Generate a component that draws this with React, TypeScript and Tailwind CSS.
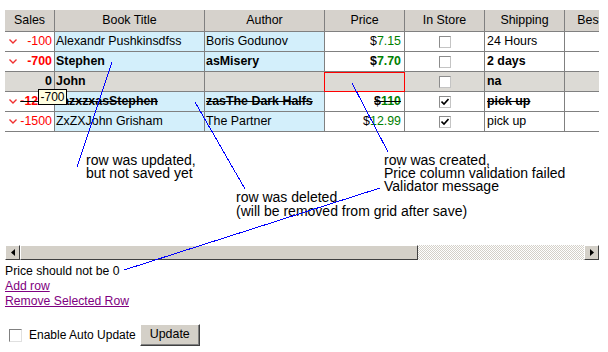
import React from 'react';

type Row = {
  sales: string;
  chevron: boolean;
  salesRed: boolean;
  title: string;
  author: string;
  price: string;
  inStore: boolean;
  shipping: string;
  bold?: boolean;
  strike?: boolean;
  gray?: boolean;
  invalid?: boolean;
};

const rows: Row[] = [
  { sales: '-100', chevron: true, salesRed: true, title: 'Alexandr Pushkinsdfss', author: 'Boris Godunov', price: '7.15', inStore: false, shipping: '24 Hours' },
  { sales: '-700', chevron: true, salesRed: true, title: 'Stephen', author: 'asMisery', price: '7.70', inStore: false, shipping: '2 days', bold: true },
  { sales: '0', chevron: false, salesRed: false, title: 'John', author: '', price: '', inStore: false, shipping: 'na', bold: true, gray: true, invalid: true },
  { sales: '-1200', chevron: true, salesRed: true, title: 'zazxzxasStephen', author: 'zasThe Dark Halfs', price: '110', inStore: true, shipping: 'pick up', bold: true, strike: true },
  { sales: '-1500', chevron: true, salesRed: true, title: 'ZxZXJohn Grisham', author: 'The Partner', price: '12.99', inStore: true, shipping: 'pick up' },
];

const Chevron = () => (
  <svg width="8" height="5" viewBox="0 0 8 5" className="shrink-0">
    <polyline points="0.5,0.5 4,4 7.5,0.5" fill="none" stroke="#f03030" strokeWidth="1.4" />
  </svg>
);

const CheckBox = ({ checked }: { checked: boolean }) => (
  <div className="w-[12px] h-[12px] bg-white border border-t-[#8c8c8c] border-l-[#8c8c8c] border-r-[#c4c4c4] border-b-[#c4c4c4] flex items-center justify-center">
    {checked && (
      <svg width="8" height="8" viewBox="0 0 8 8">
        <polyline points="0.5,3.5 3,6 7.5,1" fill="none" stroke="#000" strokeWidth="1.6" />
      </svg>
    )}
  </div>
);

const ScrollButton = ({ dir }: { dir: 'left' | 'right' }) => (
  <div className="w-[15px] h-full shrink-0 bg-[#d4d0c8] border border-t-white border-l-white border-r-[#404040] border-b-[#404040] flex items-center justify-center">
    <svg width="4" height="7" viewBox="0 0 4 7">
      {dir === 'left' ? <polygon points="4,0 0,3.5 4,7" fill="#000" /> : <polygon points="0,0 4,3.5 0,7" fill="#000" />}
    </svg>
  </div>
);

const App: React.FC = () => {
  const cell = 'h-full shrink-0 border-r border-[#808080] flex items-center overflow-hidden whitespace-nowrap';

  return (
    <div className="relative w-[608px] h-[352px] overflow-hidden bg-white text-black font-['Liberation_Sans',Arial,sans-serif] text-[12.4px]">
      <div className="pt-[10px]">
        {/* grid */}
        <div className="ml-[5px] w-[594px] overflow-hidden">
          <div className="flex h-[22px] border-b border-[#808080] bg-[#d6d2cc] w-[640px]">
            <div className={`${cell} w-[50px] justify-center`}>Sales</div>
            <div className={`${cell} w-[150px] justify-center`}>Book Title</div>
            <div className={`${cell} w-[120px] justify-center`}>Author</div>
            <div className={`${cell} w-[80px] justify-center`}>Price</div>
            <div className={`${cell} w-[80px] justify-center`}>In Store</div>
            <div className={`${cell} w-[80px] justify-center`}>Shipping</div>
            <div className={`${cell} w-[80px] justify-center`}>Bestseller</div>
          </div>

          {rows.map((r, i) => (
            <div
              key={i}
              className={`flex h-[20px] w-[640px] border-b border-[#808080] ${r.bold ? 'font-bold' : ''} ${r.strike ? 'line-through decoration-black' : ''} ${r.gray ? 'bg-[#dcdad5]' : 'bg-white'}`}
            >
              <div className={`${cell} w-[50px] justify-between pl-[4px] pr-[2px]`}>
                {r.chevron ? <Chevron /> : <span />}
                <span className={r.salesRed ? 'text-[#ff0000]' : 'text-black'}>{r.sales}</span>
              </div>
              <div className={`${cell} w-[150px] pl-px ${r.gray ? '' : 'bg-[#d3effb]'}`}>{r.title}</div>
              <div className={`${cell} w-[120px] pl-px ${r.gray ? '' : 'bg-[#d3effb]'}`}>{r.author}</div>
              <div className={`${cell} relative w-[80px] justify-end pr-[3px] overflow-visible`}>
                {r.price && (
                  <span>
                    $<span className="text-[#008000]">{r.price}</span>
                  </span>
                )}
                {r.invalid && <div className="absolute -left-px top-0 -right-px -bottom-px border border-[#ff0000]" />}
              </div>
              <div className={`${cell} w-[80px] justify-center`}>
                <CheckBox checked={r.inStore} />
              </div>
              <div className={`${cell} w-[80px] pl-[2px]`}>{r.shipping}</div>
              <div className={`${cell} w-[80px]`} />
            </div>
          ))}
        </div>

        {/* horizontal scrollbar */}
        <div className="ml-[5px] mt-[113px] w-[594px] h-[15px] flex">
          <ScrollButton dir="left" />
          <div className="w-[398px] h-full shrink-0 bg-[#d4d0c8] border border-t-white border-l-white border-r-[#404040] border-b-[#404040]" />
          <div className="flex-1 h-full bg-[image:repeating-conic-gradient(#d4d0c8_0_25%,#ffffff_0_50%)] bg-[length:2px_2px]" />
          <ScrollButton dir="right" />
        </div>

        <div className="mt-[4px] pl-[5px] leading-[15px] text-[12.2px]">
          <div>Price should not be 0</div>
          <div>
            <a href="#" className="text-[#800080] underline">Add row</a>
          </div>
          <div>
            <a href="#" className="text-[#800080] underline">Remove Selected Row</a>
          </div>
        </div>

        <div className="mt-[15px] h-[22px] flex items-center text-[12px]">
          <div className="ml-[9px] w-[13px] h-[13px] bg-white border border-t-[#808080] border-l-[#808080] border-r-[#e0e0e0] border-b-[#e0e0e0]" />
          <span className="ml-[7px]">Enable Auto Update</span>
          <button className="ml-[4px] w-[60px] h-[22px] bg-[#d4d0c8] border border-t-white border-l-white border-r-[#404040] border-b-[#404040] shadow-[inset_-1px_-1px_0_#808080] text-[12.4px] pb-[2px]">
            Update
          </button>
        </div>
      </div>

      {/* tooltip */}
      <div className="absolute left-[38px] top-[89px] w-[29px] h-[16px] bg-[#ffffe1] border border-black flex items-center justify-center text-[12px]">
        -700
      </div>

      {/* annotations */}
      <div className="absolute left-[86px] top-[154px] text-[14px] leading-[13px] whitespace-nowrap">
        <div>row was updated,</div>
        <div>but not saved yet</div>
      </div>
      <div className="absolute left-[236px] top-[190px] text-[14px] leading-[14px] whitespace-nowrap">
        <div>row was deleted</div>
        <div>(will be removed from grid after save)</div>
      </div>
      <div className="absolute left-[384px] top-[154px] text-[14px] leading-[13px] whitespace-nowrap">
        <div>row was created,</div>
        <div>Price column validation failed</div>
        <div>Validator message</div>
      </div>

      <svg className="absolute left-0 top-0 pointer-events-none" width="608" height="352" shapeRendering="crispEdges">
        <line x1="112" y1="62" x2="77" y2="167" stroke="#0000ff" strokeWidth="1" />
        <line x1="195" y1="102" x2="245" y2="189" stroke="#0000ff" strokeWidth="1" />
        <line x1="352" y1="83" x2="388" y2="152" stroke="#0000ff" strokeWidth="1" />
        <line x1="380" y1="188" x2="124" y2="270" stroke="#0000ff" strokeWidth="1" />
      </svg>
    </div>
  );
};

export default App;
